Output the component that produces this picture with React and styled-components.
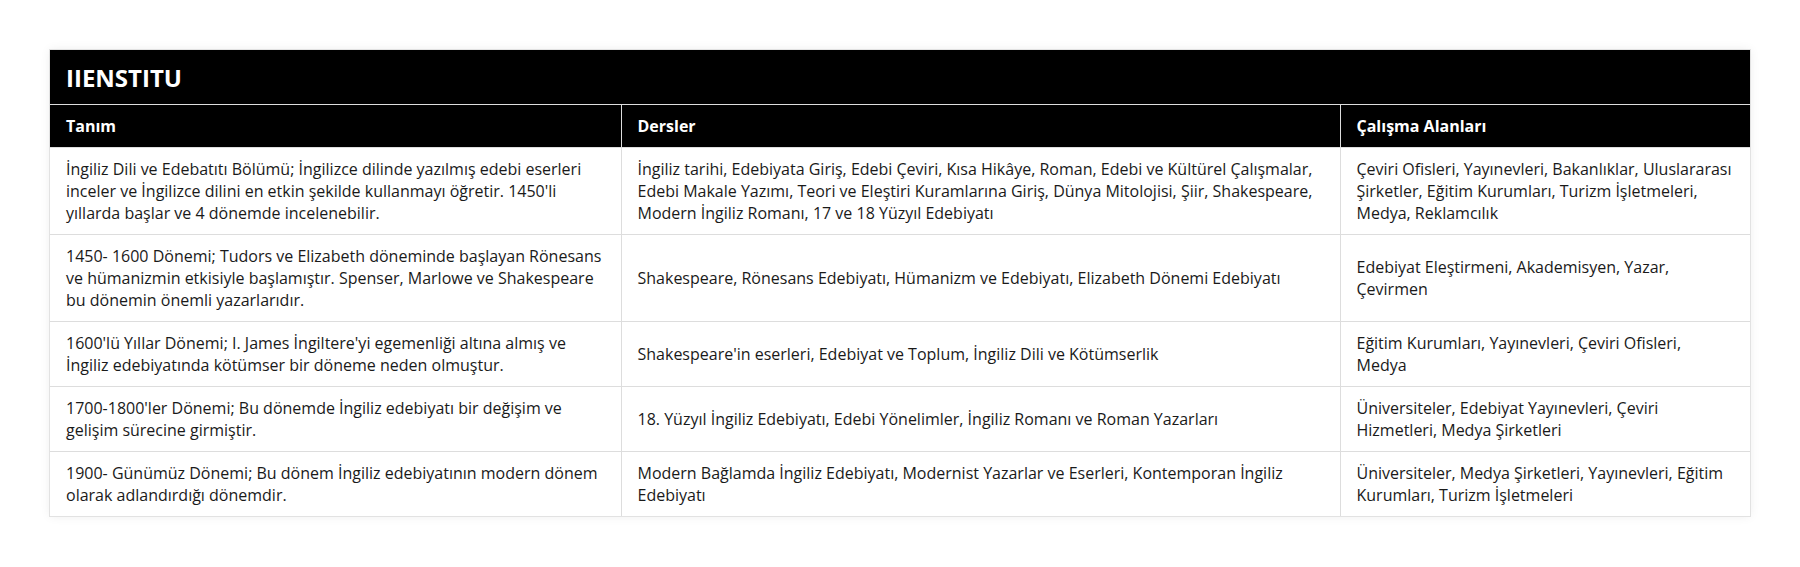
import React from "react";
import styled, { createGlobalStyle } from "styled-components";

const Global = createGlobalStyle`
  html, body { margin: 0; padding: 0; background: #fff; }
  body { font-family: "Open Sans", "Noto Sans", sans-serif; color: #1a1a1a; }
`;

const Page = styled.div`
  padding: 50px;
`;

const Card = styled.div`
  background: #fff;
  box-shadow: 0 0 0 1px #e2e2e2, 0 0 10px rgba(0, 0, 0, 0.08);
`;

const Title = styled.div`
  background: #000;
  color: #fff;
  font-weight: 700;
  font-size: 24px;
  line-height: 32px;
  padding: 12px 16px 10px;
`;

const Table = styled.table`
  width: 100%;
  border-collapse: collapse;
  table-layout: fixed;
  font-size: 16px;
  line-height: 22px;
`;

const Th = styled.th`
  background: #000;
  color: #fff;
  font-weight: 700;
  text-align: left;
  padding: 10px 16px;
  border-top: 1px solid #ddd;
  border-left: 1px solid #ddd;
  &:first-child { border-left: none; }
`;

const Td = styled.td`
  padding: 10px 16px;
  vertical-align: middle;
  border-top: 1px solid #ddd;
  border-left: 1px solid #ddd;
  color: #1a1a1a;
  &:first-child { border-left: none; }
`;

const rows = [
  [
    "İngiliz Dili ve Edebatıtı Bölümü; İngilizce dilinde yazılmış edebi eserleri inceler ve İngilizce dilini en etkin şekilde kullanmayı öğretir. 1450'li yıllarda başlar ve 4 dönemde incelenebilir.",
    "İngiliz tarihi, Edebiyata Giriş, Edebi Çeviri, Kısa Hikâye, Roman, Edebi ve Kültürel Çalışmalar, Edebi Makale Yazımı, Teori ve Eleştiri Kuramlarına Giriş, Dünya Mitolojisi, Şiir, Shakespeare, Modern İngiliz Romanı, 17 ve 18 Yüzyıl Edebiyatı",
    "Çeviri Ofisleri, Yayınevleri, Bakanlıklar, Uluslararası Şirketler, Eğitim Kurumları, Turizm İşletmeleri, Medya, Reklamcılık",
  ],
  [
    "1450- 1600 Dönemi; Tudors ve Elizabeth döneminde başlayan Rönesans ve hümanizmin etkisiyle başlamıştır. Spenser, Marlowe ve Shakespeare bu dönemin önemli yazarlarıdır.",
    "Shakespeare, Rönesans Edebiyatı, Hümanizm ve Edebiyatı, Elizabeth Dönemi Edebiyatı",
    "Edebiyat Eleştirmeni, Akademisyen, Yazar, Çevirmen",
  ],
  [
    "1600'lü Yıllar Dönemi; I. James İngiltere'yi egemenliği altına almış ve İngiliz edebiyatında kötümser bir döneme neden olmuştur.",
    "Shakespeare'in eserleri, Edebiyat ve Toplum, İngiliz Dili ve Kötümserlik",
    "Eğitim Kurumları, Yayınevleri, Çeviri Ofisleri, Medya",
  ],
  [
    "1700-1800'ler Dönemi; Bu dönemde İngiliz edebiyatı bir değişim ve gelişim sürecine girmiştir.",
    "18. Yüzyıl İngiliz Edebiyatı, Edebi Yönelimler, İngiliz Romanı ve Roman Yazarları",
    "Üniversiteler, Edebiyat Yayınevleri, Çeviri Hizmetleri, Medya Şirketleri",
  ],
  [
    "1900- Günümüz Dönemi; Bu dönem İngiliz edebiyatının modern dönem olarak adlandırdığı dönemdir.",
    "Modern Bağlamda İngiliz Edebiyatı, Modernist Yazarlar ve Eserleri, Kontemporan İngiliz Edebiyatı",
    "Üniversiteler, Medya Şirketleri, Yayınevleri, Eğitim Kurumları, Turizm İşletmeleri",
  ],
];

export default function App() {
  return (
    <Page>
      <Global />
      <Card>
        <Title>IIENSTITU</Title>
        <Table>
          <colgroup>
            <col style={{ width: 571 }} />
            <col style={{ width: 719 }} />
            <col style={{ width: 410 }} />
          </colgroup>
          <thead>
            <tr>
              <Th>Tanım</Th>
              <Th>Dersler</Th>
              <Th>Çalışma Alanları</Th>
            </tr>
          </thead>
          <tbody>
            {rows.map((r, i) => (
              <tr key={i}>
                {r.map((c, j) => (
                  <Td key={j}>{c}</Td>
                ))}
              </tr>
            ))}
          </tbody>
        </Table>
      </Card>
    </Page>
  );
}
